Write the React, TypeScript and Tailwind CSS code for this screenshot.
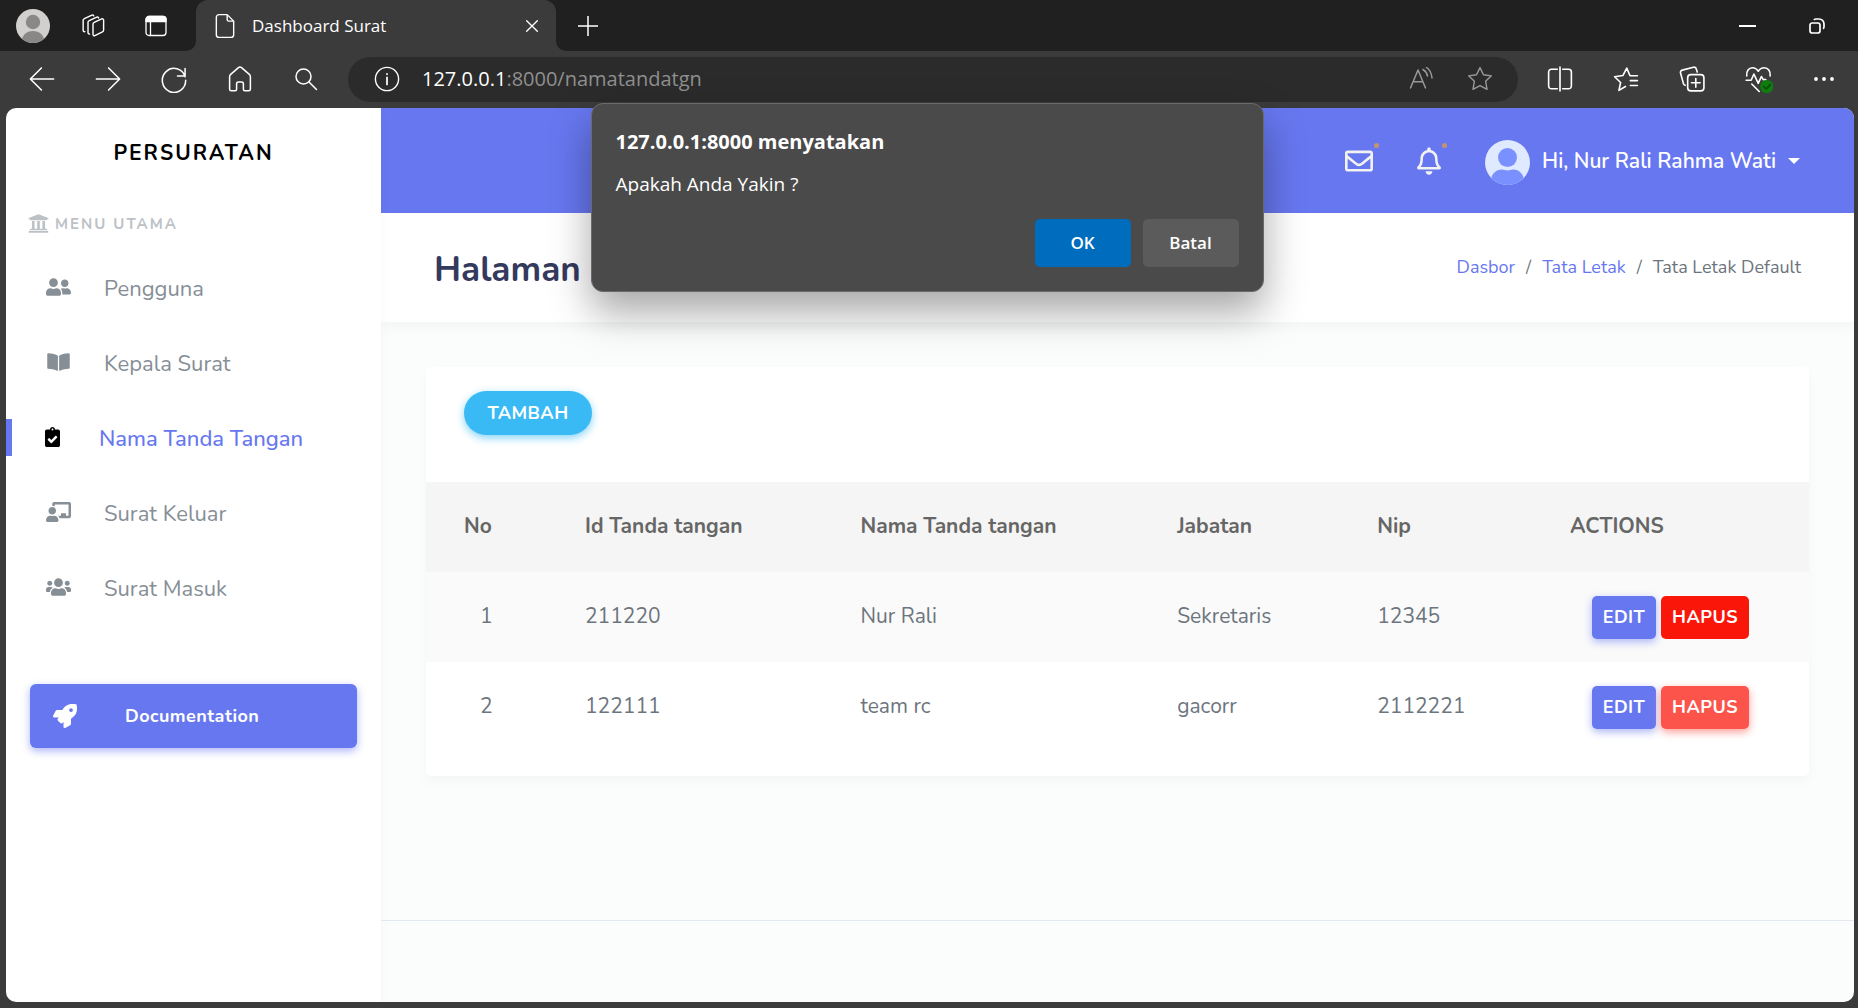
import type { ComponentType, ReactNode } from "react";
import {
  FaBookOpen,
  FaChalkboardTeacher,
  FaClipboardCheck,
  FaRegBell,
  FaRegEnvelope,
  FaRocket,
  FaUniversity,
  FaUserFriends,
  FaUsers,
} from "react-icons/fa";

const UI_FONT = "font-['Open_Sans','Noto_Sans',sans-serif]";

function Glyph({ children, className = "size-6" }: { children: ReactNode; className?: string }) {
  return (
    <svg
      viewBox="0 0 24 24"
      fill="none"
      stroke="currentColor"
      strokeWidth="1.3"
      strokeLinecap="round"
      strokeLinejoin="round"
      className={className}
      aria-hidden="true"
    >
      {children}
    </svg>
  );
}

function ToolButton({ label, children }: { label: string; children: ReactNode }) {
  return (
    <button aria-label={label} className="flex h-11 w-[66px] shrink-0 items-center justify-center pb-0.5 text-white">
      {children}
    </button>
  );
}

function TabFlare({ side }: { side: "left" | "right" }) {
  return (
    <svg viewBox="0 0 10 10" className="size-2.5 shrink-0 self-end text-[#3b3b3b]" aria-hidden="true">
      <path fill="currentColor" d={side === "left" ? "M10 0v10H0A10 10 0 0 0 10 0z" : "M0 0v10h10A10 10 0 0 1 0 0z"} />
    </svg>
  );
}

function TabStrip() {
  return (
    <div className="flex h-[51px] bg-[#202020] text-white">
      <div className="flex items-center pl-4">
        <button aria-label="Profil" className="size-[34px] overflow-hidden rounded-full">
          <svg viewBox="0 0 34 34" aria-hidden="true">
            <rect width="34" height="34" fill="#d2d0ce" />
            <circle cx="17" cy="13" r="7.2" fill="#8a8886" />
            <path d="M5.500 34c0-8 5-12 11.500-12s11.500 4 11.500 12z" fill="#8a8886" />
          </svg>
        </button>
        <button aria-label="Ruang kerja" className="ml-[30px]">
          <Glyph className="size-[26px]">
            <path d="M12 10.200v9.500c0 1 .8 1.600 1.700 1.200l7-3.400c.7-.4 1.100-.9 1.100-1.700V6.600c0-1-.8-1.500-1.700-1.100l-7 3.200c-.7.3-1.100.8-1.100 1.500z" />
            <path d="M8.800 19.400c-.8.100-1.400-.4-1.400-1.300V8.500c0-.7.4-1.200 1.100-1.500l7-3.200c.8-.3 1.500 0 1.700.8" />
            <path d="M4.500 17.200c-1 .2-1.600-.3-1.600-1.200V6.600c0-.7.4-1.200 1.100-1.500l7-3.200c.8-.3 1.500 0 1.700.8" />
          </Glyph>
        </button>
        <button aria-label="Menu tab" className="ml-[38px]">
          <Glyph className="size-6">
            <rect x="2" y="2.500" width="20" height="19" rx="3" />
            <path d="M2 7.500V5.500a3 3 0 0 1 3-3h14a3 3 0 0 1 3 3v2z" fill="currentColor" />
            <path d="M6.500 8v13" />
          </Glyph>
        </button>
      </div>
      <div className="ml-[18px] flex">
        <TabFlare side="left" />
        <div className="flex w-[360px] items-center rounded-t-xl bg-[#3b3b3b] px-4">
          <Glyph className="size-[26px]">
            <path d="M14 1.500H6.500a2.500 2.500 0 0 0-2.500 2.500v16a2.500 2.500 0 0 0 2.500 2.500h11a2.500 2.500 0 0 0 2.500-2.500V7.500zM14 1.500v4.500a1.500 1.500 0 0 0 1.500 1.500H20" />
          </Glyph>
          <span className="ml-3.5 flex-1 text-[17px] leading-6">Dashboard Surat</span>
          <button aria-label="Tutup tab">
            <Glyph className="size-4">
              <path d="M4 4l16 16M20 4L4 20" strokeWidth="2" />
            </Glyph>
          </button>
        </div>
        <TabFlare side="right" />
      </div>
      <button aria-label="Tab baru" className="ml-3">
        <Glyph className="size-5">
          <path d="M12 0v24M0 12h24" strokeWidth="1.800" />
        </Glyph>
      </button>
      <div className="ml-auto flex items-center gap-[53px] pr-[33px]">
        <button aria-label="Perkecil" className="flex h-8 w-[17px] items-center">
          <span className="h-0.5 w-full bg-white" />
        </button>
        <button aria-label="Pulihkan">
          <svg viewBox="0 0 16 16" fill="none" stroke="currentColor" strokeWidth="1.700" className="size-4" aria-hidden="true">
            <rect x="1" y="5" width="10" height="10" rx="2.300" />
            <path d="M4.800 1.800C5.500 1.200 6.300 1 7.200 1H10a5 5 0 0 1 5 5v2.500c0 1-.3 1.800-.8 2.400" />
          </svg>
        </button>
      </div>
    </div>
  );
}

function Toolbar() {
  return (
    <div className="flex h-[57px] items-center pr-px pl-[9px]">
      <ToolButton label="Kembali">
        <Glyph className="size-7">
          <path d="M22 12H2.500M11.500 2.500L2 12l9.500 9.500" />
        </Glyph>
      </ToolButton>
      <ToolButton label="Maju">
        <Glyph className="size-7">
          <path d="M2 12h19.500M12.500 2.500L22 12l-9.500 9.500" />
        </Glyph>
      </ToolButton>
      <ToolButton label="Muat ulang">
        <Glyph className="size-7">
          <path d="M21.500 10A10 10.300 0 1 0 22 13M21.500 3v6.500h-6.500" />
        </Glyph>
      </ToolButton>
      <ToolButton label="Beranda">
        <Glyph className="size-7">
          <path d="M10.700 2.200L4 8c-.6.500-.9 1.200-.9 2v10.500c0 .8.600 1.500 1.400 1.500h3.300c.7 0 1.300-.6 1.300-1.300V16c0-.9.7-1.500 1.500-1.500h2.800c.8 0 1.500.6 1.500 1.500v4.700c0 .7.600 1.300 1.300 1.300h3.300c.8 0 1.400-.7 1.400-1.500V10c0-.8-.3-1.500-.9-2l-6.700-5.800a2 2 0 0 0-2.600 0z" />
        </Glyph>
      </ToolButton>
      <ToolButton label="Cari">
        <Glyph className="size-6">
          <circle cx="9.500" cy="9.500" r="7.500" strokeWidth="1.500" />
          <path d="M15 15l7.500 7.500" strokeWidth="1.500" />
        </Glyph>
      </ToolButton>
      <div className="ml-[9px] flex h-[45px] min-w-0 flex-1 items-center rounded-full bg-[#2b2b2b] pr-[25px] pb-0.5 pl-[26px] text-white">
        <button aria-label="Informasi situs">
          <Glyph className="size-[26px]">
            <circle cx="12" cy="12" r="10.700" />
            <path d="M12 10.500v6.500M12 7.300v.2" strokeWidth="1.600" />
          </Glyph>
        </button>
        <a href="#alamat" className="ml-[22px] flex-1 truncate text-xl leading-7">
          127.0.0.1<span className="text-[#8f8f8f]">:8000/namatandatgn</span>
        </a>
        <button aria-label="Baca keras" className="text-[#999999]">
          <Glyph className="size-6">
            <path d="M1.500 21L9 3l7.500 18M4.300 14.800h9.400M14 2.500c2.500 1.500 4 3.700 4.500 6.500M17.500.5c3 2 5 5.500 5.500 10.500" strokeWidth="1.500" />
          </Glyph>
        </button>
        <button aria-label="Favorit" className="ml-[34px] text-[#999999]">
          <Glyph className="size-[26px]">
            <path d="M12 1.500l3.200 6.600 7.300 1-5.300 5 1.300 7.400L12 18.200l-6.500 3.300 1.300-7.400-5.300-5 7.300-1z" />
          </Glyph>
        </button>
      </div>
      <div className="ml-[9px] flex">
        <ToolButton label="Layar terpisah">
          <Glyph className="size-[26px]">
            <path d="M9.500 3H4a2.500 2.500 0 0 0-2.500 2.500v13A2.500 2.500 0 0 0 4 21h5.500M14.500 3H20a2.500 2.500 0 0 1 2.500 2.500v13A2.500 2.500 0 0 1 20 21h-5.500M12 1v22" strokeWidth="1.500" />
          </Glyph>
        </ToolButton>
        <ToolButton label="Daftar favorit">
          <Glyph className="size-[26px]">
            <path d="M22.500 9h-6.800l-3-7-3.600 6.800-7.600 1.100 5.500 5.300-1.500 7.300 6-3.600M16 13.500h6.500M16 18h6.500" strokeWidth="1.500" />
          </Glyph>
        </ToolButton>
        <ToolButton label="Koleksi">
          <Glyph className="size-[26px]">
            <rect x="8" y="8" width="15" height="15" rx="3" strokeWidth="1.500" />
            <path d="M15.500 11.500v8M11.500 15.500h8M16.800 5.500l-.8-2.800a2.200 2.200 0 0 0-2.700-1.600L3 3.800a2.200 2.200 0 0 0-1.600 2.700l2.700 9.800a2 2 0 0 0 1.600 1.500" strokeWidth="1.500" />
          </Glyph>
        </ToolButton>
        <ToolButton label="Kesehatan browser">
          <Glyph className="size-[30px]">
            <path d="M3 9.500C2.500 5.500 4.700 3 7.500 3c2.200 0 3.700 1.200 4.700 2.800C13.200 4.200 15 3 17 3c3 0 5.200 2.500 4.700 6.500M2.500 13h4l2.200-5 3.500 7.500 2.500-5.500 1.500 2.500h2M7 16l6 6" />
            <circle cx="19" cy="18" r="5.300" fill="#107c10" stroke="none" />
            <path d="M16.500 18l2 2 3.300-3.500" stroke="#0a4a0a" />
          </Glyph>
        </ToolButton>
        <ToolButton label="Lainnya">
          <Glyph className="size-6">
            <g fill="currentColor" stroke="none">
              <circle cx="4" cy="12" r="1.900" />
              <circle cx="12" cy="12" r="1.900" />
              <circle cx="20" cy="12" r="1.900" />
            </g>
          </Glyph>
        </ToolButton>
      </div>
    </div>
  );
}

type NavEntry = {
  label: string;
  icon: ComponentType<{ className?: string }>;
  size: string;
  active?: boolean;
};

const NAV: NavEntry[] = [
  { label: "Pengguna", icon: FaUserFriends, size: "h-5 w-[25px]" },
  { label: "Kepala Surat", icon: FaBookOpen, size: "h-5 w-[23px]" },
  { label: "Nama Tanda Tangan", icon: FaClipboardCheck, size: "h-5 w-[15px]", active: true },
  { label: "Surat Keluar", icon: FaChalkboardTeacher, size: "h-5 w-[25px]" },
  { label: "Surat Masuk", icon: FaUsers, size: "h-5 w-[25px]" },
];

function Sidebar() {
  return (
    <aside className="z-10 w-[375px] shrink-0 bg-white shadow-[0_6px_12px_rgba(0,0,0,0.03)]">
      <div className="flex h-[89px] items-center justify-center">
        <a href="#beranda" className="text-[21px] leading-8 font-bold tracking-[2px] text-black">
          PERSURATAN
        </a>
      </div>
      <div className="flex h-[53px] items-center gap-1.5 pl-[22px] text-[#bcc1c6]">
        <FaUniversity className="size-[21px]" />
        <span className="text-[15px] leading-6 font-bold tracking-[2px]">MENU UTAMA</span>
      </div>
      <nav>
        {NAV.map(({ label, icon: Icon, size, active }) => (
          <a key={label} href={"#" + label} className="flex h-[75px] items-center">
            <span className={active ? "h-[37px] w-1.5 bg-[#6777ef]" : "h-[37px] w-1.5"} />
            <span className={active ? "flex w-20 justify-center pb-0.5" : "flex w-[92px] justify-center pb-0.5"}>
              <Icon className={size + (active ? " text-black" : " text-[#868e96]")} />
            </span>
            <span
              className={
                active
                  ? "pt-0.5 pl-[7px] text-[22px] leading-8 font-medium text-[#6777ef]"
                  : "pt-0.5 text-[22px] leading-8 text-[#868e96]"
              }
            >
              {label}
            </span>
          </a>
        ))}
      </nav>
      <a
        href="#documentation"
        className="mx-6 mt-[59px] flex h-16 items-center rounded-md bg-[#6777ef] pl-[23px] text-white shadow-[0_3px_9px_#acb5f6]"
      >
        <FaRocket className="size-6" />
        <span className="ml-12 text-lg leading-7 font-bold tracking-wide">Documentation</span>
      </a>
    </aside>
  );
}

function Avatar() {
  return (
    <svg viewBox="0 0 45 45" className="size-[45px]" aria-hidden="true">
      <clipPath id="avatar-clip">
        <circle cx="22.500" cy="22.500" r="22.500" />
      </clipPath>
      <g clipPath="url(#avatar-clip)">
        <rect width="45" height="45" fill="#dfe9ff" />
        <circle cx="22.500" cy="17.500" r="9.500" fill="#7b90ff" />
        <path d="M6 45V41c0-7 5-11.500 11-11.500 2 0 3.500 1 5.500 1s3.500-1 5.500-1c6 0 11 4.500 11 11.500v4z" fill="#7b90ff" />
      </g>
    </svg>
  );
}

function Navbar() {
  return (
    <header className="flex h-[105px] items-center justify-end bg-[#6777ef] pr-[54px] text-white">
      <button aria-label="Pesan" className="relative text-[#f2f2f2]">
        <FaRegEnvelope className="size-7" />
        <span className="absolute -top-1 -right-1.5 size-[5px] rounded-full bg-[#c6936f]" />
      </button>
      <button aria-label="Notifikasi" className="relative ml-11 text-[#f2f2f2]">
        <FaRegBell className="h-7 w-6" />
        <span className="absolute -top-1 -right-1.5 size-[5px] rounded-full bg-[#c6936f]" />
      </button>
      <button className="ml-11 flex items-center">
        <span className="pt-[3px]">
          <Avatar />
        </span>
        <span className="ml-3 text-[21px] leading-8 font-semibold">Hi, Nur Rali Rahma Wati</span>
        <span className="ml-3 border-x-[6px] border-t-[6px] border-x-transparent border-t-white" />
      </button>
    </header>
  );
}

type Row = { no: number; id: string; nama: string; jabatan: string; nip: string; pressed?: boolean };

const ROWS: Row[] = [
  { no: 1, id: "211220", nama: "Nur Rali", jabatan: "Sekretaris", nip: "12345", pressed: true },
  { no: 2, id: "122111", nama: "team rc", jabatan: "gacorr", nip: "2112221" },
];

const COLUMNS = [
  { title: "No", width: "w-[159px]" },
  { title: "Id Tanda tangan", width: "w-[20%]" },
  { title: "Nama Tanda tangan", width: "w-[23%]" },
  { title: "Jabatan", width: "w-[200px]" },
  { title: "Nip", width: "w-[14%]" },
  { title: "ACTIONS", width: "w-[239px]" },
];

function SignatureTable() {
  return (
    <table className="w-full table-fixed text-left text-[21px] leading-8 text-[#6c757d]">
      <thead>
        <tr className="h-[90px] bg-[#f5f5f5] text-[#666666]">
          {COLUMNS.map(({ title, width }) => (
            <th key={title} scope="col" className={width + " pb-0.5 font-bold first:pl-[38px]"}>
              {title}
            </th>
          ))}
        </tr>
      </thead>
      <tbody>
        {ROWS.map((row) => (
          <tr key={row.no} className="h-[90px] odd:bg-[#fafafa]">
            <td className="pb-0.5 pl-[54px]">{row.no}</td>
            <td className="pb-0.5">{row.id}</td>
            <td className="pb-0.5">{row.nama}</td>
            <td className="pb-0.5">{row.jabatan}</td>
            <td className="pb-0.5">{row.nip}</td>
            <td>
              <div className="flex gap-[5px] pl-[22px] text-lg leading-7 font-bold tracking-wide text-white">
                <button className="h-[43px] w-16 rounded-[5px] bg-[#6777ef] shadow-[0_3px_9px_#acb5f6]">EDIT</button>
                <button
                  className={
                    row.pressed
                      ? "h-[43px] w-[88px] rounded-[5px] bg-[#fb160a]"
                      : "h-[43px] w-[88px] rounded-[5px] bg-[#fc544b] shadow-[0_3px_9px_#fd9b96]"
                  }
                >
                  HAPUS
                </button>
              </div>
            </td>
          </tr>
        ))}
      </tbody>
    </table>
  );
}

function Content() {
  return (
    <main className="flex min-w-0 flex-1 flex-col bg-[#fafdfb]">
      <Navbar />
      <div className="flex h-[109px] items-center justify-between bg-white px-[53px] shadow-[0_6px_12px_rgba(0,0,0,0.03)]">
        <h1 className="pt-1 text-[35px] leading-[48px] font-bold text-[#34395e]">Halaman</h1>
        <nav aria-label="Breadcrumb" className="flex gap-[11px] pb-0.5 text-lg leading-7 text-[#6c757d]">
          <a href="#dasbor" className="text-[#6777ef]">Dasbor</a>
          <span>/</span>
          <a href="#tata-letak" className="text-[#6777ef]">Tata Letak</a>
          <span>/</span>
          <span>Tata Letak Default</span>
        </nav>
      </div>
      <section className="mx-[45px] mt-[45px] rounded-[5px] bg-white pb-6 shadow-[0_6px_12px_rgba(0,0,0,0.03)]">
        <div className="flex h-[115px] items-start pt-6 pl-[38px]">
          <button className="h-11 w-32 rounded-full bg-[#3abaf4] text-lg leading-7 font-bold tracking-wide text-white shadow-[0_3px_9px_#82d3f8]">
            TAMBAH
          </button>
        </div>
        <SignatureTable />
      </section>
      <footer className="mt-auto h-[82px] border-t border-[#e3eaef]" />
    </main>
  );
}

function ConfirmDialog() {
  return (
    <div className={"absolute inset-x-0 top-[103px] z-20 flex justify-center pr-1 " + UI_FONT}>
      <div
        role="alertdialog"
        aria-labelledby="confirm-title"
        aria-describedby="confirm-text"
        className="flex h-[189px] w-[673px] flex-col rounded-xl border border-[#6a6a6a] bg-[#4a4a4a] px-6 pt-[22px] text-white shadow-[0_20px_40px_rgba(0,0,0,0.35)]"
      >
        <h2 id="confirm-title" className="text-xl leading-8 font-bold">127.0.0.1:8000 menyatakan</h2>
        <p id="confirm-text" className="mt-2.5 text-[19px] leading-8">Apakah Anda Yakin ?</p>
        <div className="mt-[19px] flex justify-end gap-3 text-[17px] leading-6 font-semibold">
          <button className="h-12 w-24 rounded-[5px] bg-[#006cbe]">OK</button>
          <button className="h-12 w-24 rounded-[5px] bg-[#5b5b5b]">Batal</button>
        </div>
      </div>
    </div>
  );
}

export default function App() {
  return (
    <div className={"relative flex min-h-screen flex-col bg-[#3b3b3b] " + UI_FONT}>
      <TabStrip />
      <Toolbar />
      <div className="mr-1 mb-1.5 ml-1.5 flex flex-1 overflow-hidden rounded-[10px] font-['Nunito','Lato',sans-serif]">
        <Sidebar />
        <Content />
      </div>
      <ConfirmDialog />
    </div>
  );
}
